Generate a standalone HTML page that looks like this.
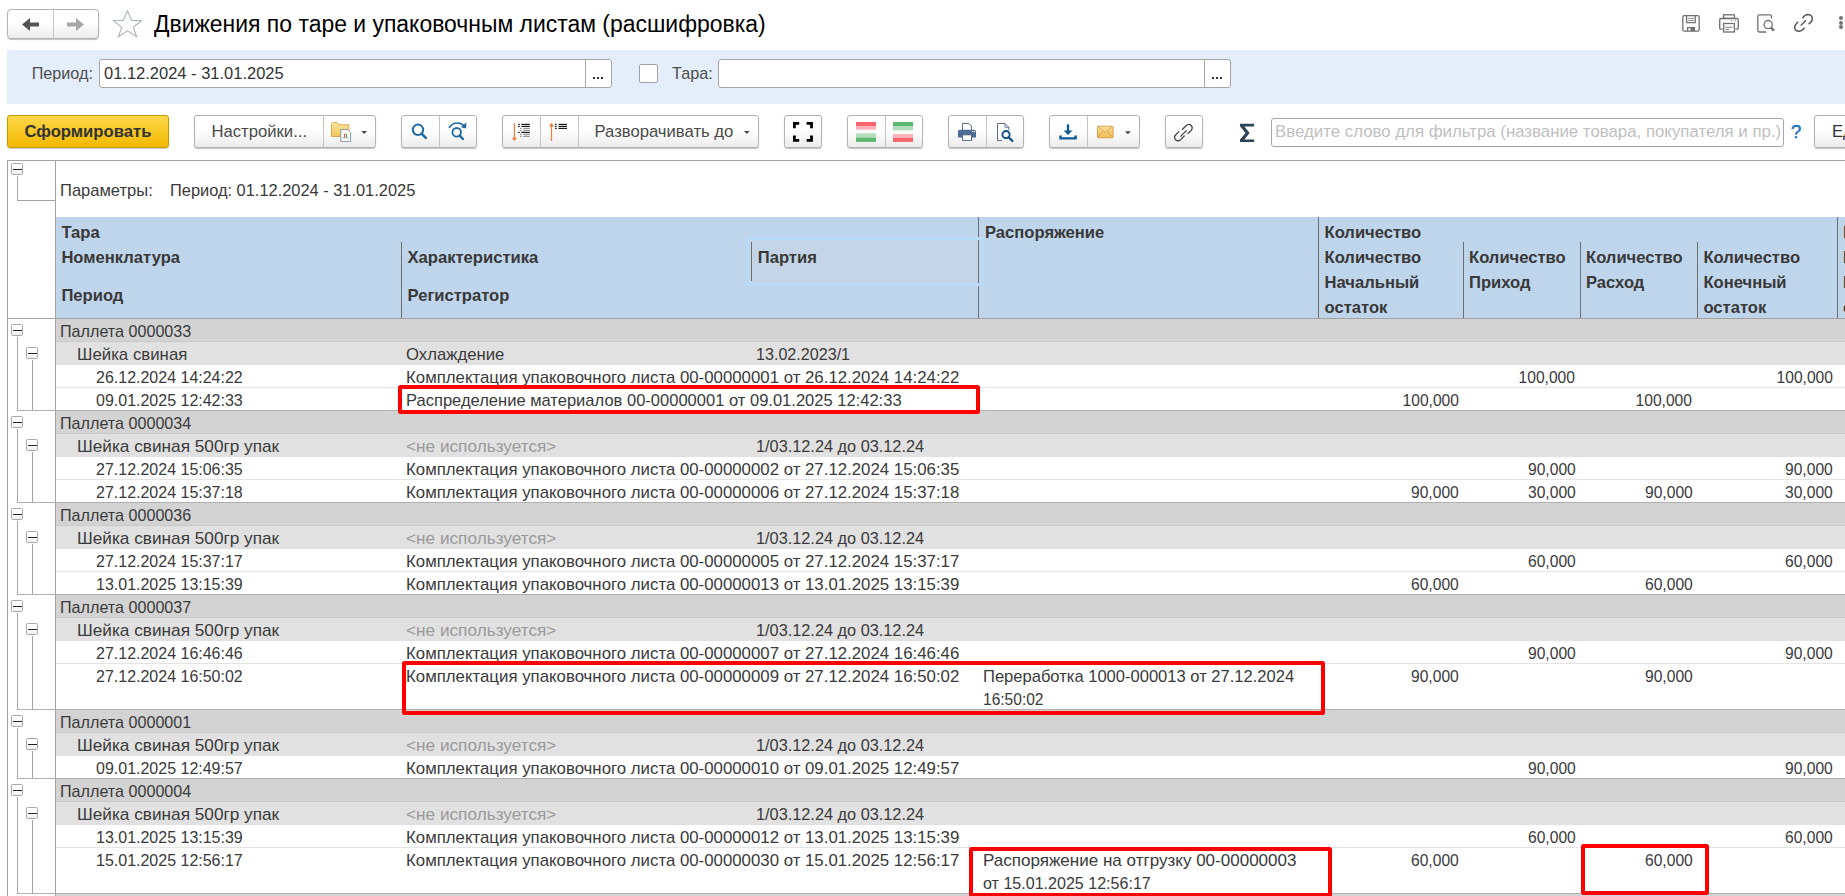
<!DOCTYPE html><html><head><meta charset="utf-8"><style>
html,body{margin:0;padding:0}
body{width:1845px;height:896px;overflow:hidden;position:relative;background:#fff;font-family:"Liberation Sans",sans-serif}
.t{position:absolute;white-space:pre}
svg{position:absolute;overflow:visible}
</style></head><body>

<div style="position:absolute;left:7px;top:9px;width:91.5px;height:30px;box-sizing:border-box;border:1px solid #b3b3b3;border-radius:3px;background:linear-gradient(#ffffff 0%,#ffffff 45%,#ececec 100%);box-shadow:0 1px 1px rgba(0,0,0,0.25);border-radius:4px"></div>
<div style="position:absolute;left:53px;top:10px;width:1px;height:28px;background:#c4c4c4"></div>
<svg style="left:0;top:0" width="1" height="1"><path d="M22 24.5 L30 18 L30 22.5 L39 22.5 L39 26.5 L30 26.5 L30 31 Z" fill="#555"/><path d="M84 24.5 L76 18 L76 22.5 L67 22.5 L67 26.5 L76 26.5 L76 31 Z" fill="#a8a8a8"/></svg>
<svg style="left:0;top:0" width="1" height="1"><path d="M127.5 10.9 L131.8 20.5 L141.5 20.5 L133.4 27.4 L136.6 36.8 L127.5 30.9 L118.4 36.8 L121.6 27.4 L113.5 20.5 L123.2 20.5 Z" fill="none" stroke="#aab2bb" stroke-width="1.1"/></svg>
<div class="t" style="left:154.2px;top:10.71px;font-size:23px;line-height:26.45px;color:#000;font-weight:normal;transform:scaleX(0.997);transform-origin:left top;">Движения по таре и упаковочным листам (расшифровка)</div>
<svg style="left:0;top:0" width="1" height="1" fill="none" stroke="#707070" stroke-width="1.3">
<rect x="1682.8" y="15.6" width="16.4" height="15.6" rx="1.6"/>
<path d="M1686.6 15.6 V22.6 H1695.2 V15.6"/><path d="M1688.1 18.3 H1694 M1688.1 20.4 H1694" stroke-width="0.8"/>
<path d="M1687.6 31.2 V27.6 H1694.4 V31.2"/><rect x="1690.6" y="28" width="3.6" height="3" fill="#707070" stroke="none"/>
<rect x="1723.6" y="14.8" width="10.8" height="3.6"/>
<path d="M1722.5 29.2 H1721 Q1719.7 29.2 1719.7 27.9 V19.8 Q1719.7 18.5 1721 18.5 H1737 Q1738.3 18.5 1738.3 19.8 V27.9 Q1738.3 29.2 1737 29.2 H1735.5"/>
<rect x="1723.6" y="23.5" width="10.8" height="8.5"/>
<path d="M1725.2 27.2 H1732.6 M1725.2 29.4 H1729" stroke-width="0.9"/>
<path d="M1731 20.7 H1732.2 M1734.6 20.7 H1735.8" stroke-width="0.9"/>
<path d="M1766.2 32 H1759.3 Q1757.8 32 1757.8 30.5 V16.3 Q1757.8 14.8 1759.3 14.8 H1770 Q1771.5 14.8 1771.5 16.3 V18.4"/>
<circle cx="1768.2" cy="24.6" r="4.1"/><path d="M1771.3 27.8 L1774 30.6" stroke-width="2.4"/>
<path d="M1802.4 18.2 Q1805 14.6 1808 14.6 Q1812.3 14.8 1812.3 19 Q1812.2 21.6 1808.6 24.2" stroke="#5a5a5a" stroke-width="1.5"/>
<path d="M1798.2 21.8 Q1794.6 25 1794.6 27.6 Q1795 31.2 1799 31.3 Q1801.6 31.3 1804.6 27.8" stroke="#5a5a5a" stroke-width="1.5"/>
<path d="M1800.8 25.5 L1806.1 20.2" stroke="#5a5a5a" stroke-width="1.5"/>
</svg>
<div style="position:absolute;left:1838.5px;top:15.5px;width:4px;height:4px;border-radius:50%;background:#747474"></div>
<div style="position:absolute;left:1838.5px;top:20.5px;width:4px;height:4px;border-radius:50%;background:#747474"></div>
<div style="position:absolute;left:1838.5px;top:25.3px;width:4px;height:4px;border-radius:50%;background:#747474"></div>
<div style="position:absolute;left:7px;top:50px;width:1838px;height:54px;background:#e4eefa"></div>
<div class="t" style="left:31.7px;top:64.07px;font-size:16.2px;line-height:18.63px;color:#4d4d4d;font-weight:normal;">Период:</div>
<div style="position:absolute;left:99px;top:59.3px;width:513px;height:28.4px;box-sizing:border-box;border:1px solid #a5a5a5;border-radius:3px;background:#fff"></div>
<div style="position:absolute;left:585px;top:60px;width:1px;height:27px;background:#a5a5a5"></div>
<div class="t" style="left:103.6px;top:63.64px;font-size:16.67px;line-height:19.171px;color:#333;font-weight:normal;transform:scaleX(0.99);transform-origin:left top;">01.12.2024 - 31.01.2025</div>
<div style="position:absolute;left:593.0px;top:76.8px;width:2.2px;height:2.2px;background:#333"></div>
<div style="position:absolute;left:597.1px;top:76.8px;width:2.2px;height:2.2px;background:#333"></div>
<div style="position:absolute;left:601.2px;top:76.8px;width:2.2px;height:2.2px;background:#333"></div>
<div style="position:absolute;left:639px;top:64px;width:19px;height:19px;box-sizing:border-box;border:1px solid #a0a0a0;border-radius:2px;background:#fff"></div>
<div class="t" style="left:672px;top:64.07px;font-size:16.2px;line-height:18.63px;color:#4d4d4d;font-weight:normal;">Тара:</div>
<div style="position:absolute;left:718px;top:59.3px;width:513px;height:28.4px;box-sizing:border-box;border:1px solid #a5a5a5;border-radius:3px;background:#fff"></div>
<div style="position:absolute;left:1204px;top:60px;width:1px;height:27px;background:#a5a5a5"></div>
<div style="position:absolute;left:1212.0px;top:76.8px;width:2.2px;height:2.2px;background:#333"></div>
<div style="position:absolute;left:1216.1px;top:76.8px;width:2.2px;height:2.2px;background:#333"></div>
<div style="position:absolute;left:1220.2px;top:76.8px;width:2.2px;height:2.2px;background:#333"></div>
<div style="position:absolute;left:7px;top:115px;width:162px;height:33px;box-sizing:border-box;border:1px solid #c29b00;border-radius:3px;background:linear-gradient(#fdd64a,#f2b900);box-shadow:0 1px 1px rgba(0,0,0,0.2)"></div>
<div class="t" style="left:24.5px;top:121.84px;font-size:16.67px;line-height:19.171px;color:#333;font-weight:bold;">Сформировать</div>
<div style="position:absolute;left:194px;top:115px;width:182px;height:33px;box-sizing:border-box;border:1px solid #b3b3b3;border-radius:3px;background:linear-gradient(#ffffff 0%,#ffffff 45%,#ececec 100%);box-shadow:0 1px 1px rgba(0,0,0,0.25);"></div>
<div style="position:absolute;left:323px;top:116px;width:1px;height:31px;background:#c4c4c4"></div>
<div class="t" style="left:211.5px;top:121.84px;font-size:16.67px;line-height:19.171px;color:#4a4a4a;font-weight:normal;">Настройки...</div>
<svg style="left:0;top:0" width="1" height="1">
<defs><linearGradient id="fold" x1="0" y1="0" x2="0" y2="1"><stop offset="0" stop-color="#fde7a0"/><stop offset="1" stop-color="#f2c45a"/></linearGradient></defs>
<path d="M331.5 136.5 V124.5 Q331.5 122.5 333.5 122.5 H337 L339 124.8 H348.8 V136.5 Z" fill="url(#fold)" stroke="#d9a040" stroke-width="0.9"/>
<path d="M340.8 129.6 H347.8 L350.6 132.4 V141.4 H340.8 Z" fill="#fff" stroke="#7d8da0" stroke-width="0.9"/>
<path d="M344.6 137.6 V133.6" stroke="#e03a3a" stroke-width="1"/>
<path d="M346.5 137.6 V133.6" stroke="#3aa04a" stroke-width="1"/>
<path d="M342.4 137.9 H348.8" stroke="#777" stroke-width="0.6"/>
<path d="M361.4 131 H367 L364.2 134 Z" fill="#444"/>
</svg>
<div style="position:absolute;left:401px;top:115px;width:75.5px;height:33px;box-sizing:border-box;border:1px solid #b3b3b3;border-radius:3px;background:linear-gradient(#ffffff 0%,#ffffff 45%,#ececec 100%);box-shadow:0 1px 1px rgba(0,0,0,0.25);"></div>
<div style="position:absolute;left:439px;top:116px;width:1px;height:31px;background:#c4c4c4"></div>
<svg style="left:0;top:0" width="1" height="1" fill="none" stroke="#1f68a6">
<circle cx="418" cy="129.8" r="5.2" stroke-width="2"/><path d="M421.8 133.8 L425.8 137.9" stroke-width="2.6" stroke-linecap="round"/>
<circle cx="456.7" cy="132.3" r="4.3" stroke-width="1.8"/><path d="M459.7 135.6 L463 139" stroke-width="2.4" stroke-linecap="round"/>
<path d="M449 127.8 Q452.5 122.8 457.8 123 Q462 123.3 464.8 126.4" stroke-width="1.7"/><path d="M466.3 122.6 L466.2 128.6 L460.8 127.2 Z" fill="#1f68a6" stroke="none"/>
</svg>
<div style="position:absolute;left:502px;top:115px;width:256.5px;height:33px;box-sizing:border-box;border:1px solid #b3b3b3;border-radius:3px;background:linear-gradient(#ffffff 0%,#ffffff 45%,#ececec 100%);box-shadow:0 1px 1px rgba(0,0,0,0.25);"></div>
<div style="position:absolute;left:540px;top:116px;width:1px;height:31px;background:#c4c4c4"></div>
<div style="position:absolute;left:578px;top:116px;width:1px;height:31px;background:#c4c4c4"></div>
<svg style="left:0;top:0" width="1" height="1">
<path d="M514.4 123 V138.5" stroke="#ef7d40" stroke-width="1.2"/><path d="M511.8 137.7 H517 L514.4 141 Z" fill="#ef7d40"/>
<g fill="#1a1a1a"><rect x="518.2" y="123.8" width="1.6" height="1.2"/><rect x="521.4" y="123.8" width="8.4" height="1.2"/>
<rect x="518.2" y="125.8" width="1.6" height="1.2"/><rect x="521.4" y="125.8" width="8.4" height="1.2"/>
<rect x="518.2" y="131.8" width="1.6" height="1.2"/><rect x="521.4" y="131.8" width="8.4" height="1.2"/></g>
<g fill="#8a8a8a"><rect x="520" y="127.8" width="1.6" height="1.1"/><rect x="523.3" y="127.8" width="6.5" height="1.1"/>
<rect x="520" y="129.8" width="1.6" height="1.1"/><rect x="523.3" y="129.8" width="6.5" height="1.1"/>
<rect x="520" y="133.8" width="1.6" height="1.1"/><rect x="523.3" y="133.8" width="6.5" height="1.1"/>
<rect x="520" y="135.8" width="1.6" height="1.1"/><rect x="523.3" y="135.8" width="6.5" height="1.1"/></g>
<path d="M551.5 126 V141" stroke="#ef7d40" stroke-width="1.2"/><path d="M548.9 126.4 H554.1 L551.5 122.8 Z" fill="#ef7d40"/>
<g fill="#1a1a1a"><rect x="555" y="123.8" width="1.6" height="1.2"/><rect x="558.5" y="123.8" width="8.5" height="1.2"/>
<rect x="555" y="125.8" width="1.6" height="1.2"/><rect x="558.5" y="125.8" width="8.5" height="1.2"/>
<rect x="555" y="127.8" width="1.6" height="1.2"/><rect x="558.5" y="127.8" width="8.5" height="1.2"/></g>
<path d="M744 131 H749.6 L746.8 134 Z" fill="#444"/>
</svg>
<div class="t" style="left:594.5px;top:121.84px;font-size:16.67px;line-height:19.171px;color:#4a4a4a;font-weight:normal;">Разворачивать до</div>
<div style="position:absolute;left:784px;top:115px;width:37.5px;height:33px;box-sizing:border-box;border:1px solid #b3b3b3;border-radius:3px;background:linear-gradient(#ffffff 0%,#ffffff 45%,#ececec 100%);box-shadow:0 1px 1px rgba(0,0,0,0.25);"></div>
<svg style="left:0;top:0" width="1" height="1" fill="none" stroke="#000" stroke-width="2.8">
<path d="M794.4 128.2 V123.3 H799.2 M806.6 123.3 H811.5 V128.2 M811.5 135.5 V140.4 H806.6 M799.2 140.4 H794.4 V135.5"/>
</svg>
<div style="position:absolute;left:846.5px;top:115px;width:76.5px;height:33px;box-sizing:border-box;border:1px solid #b3b3b3;border-radius:3px;background:linear-gradient(#ffffff 0%,#ffffff 45%,#ececec 100%);box-shadow:0 1px 1px rgba(0,0,0,0.25);"></div>
<div style="position:absolute;left:885px;top:116px;width:1px;height:31px;background:#c4c4c4"></div>
<svg style="left:0;top:0" width="1" height="1">
<rect x="856" y="122" width="20" height="4" fill="#f7646c"/><rect x="856" y="126" width="20" height="3.7" fill="#f9b3b8"/>
<rect x="856" y="133.3" width="20" height="4.3" fill="#b3ddbb"/><rect x="856" y="137.6" width="20" height="4.3" fill="#5cb871"/>
<rect x="893" y="122" width="20" height="4" fill="#5cb871"/><rect x="893" y="126" width="20" height="4.5" fill="#b3ddbb"/>
<rect x="893" y="134.1" width="20" height="3.8" fill="#f9b3b8"/><rect x="893" y="137.9" width="20" height="4" fill="#f7646c"/>
</svg>
<div style="position:absolute;left:948px;top:115px;width:75.5px;height:33px;box-sizing:border-box;border:1px solid #b3b3b3;border-radius:3px;background:linear-gradient(#ffffff 0%,#ffffff 45%,#ececec 100%);box-shadow:0 1px 1px rgba(0,0,0,0.25);"></div>
<div style="position:absolute;left:986px;top:116px;width:1px;height:31px;background:#c4c4c4"></div>
<svg style="left:0;top:0" width="1" height="1">
<path d="M962.5 130.5 V123.5 H968.8 L971.4 126.1 V130.5" fill="#fff" stroke="#4a5f7a" stroke-width="0.9"/>
<path d="M958 131.5 Q958 129.8 959.7 129.8 H974.3 Q976 129.8 976 131.5 V137.5 H972 V140.6 H962 V137.5 H958 Z" fill="#4d6b93"/>
<rect x="962.6" y="134.9" width="8.8" height="5.5" fill="#fff" stroke="#4a5f7a" stroke-width="0.8"/>
<rect x="972.3" y="131" width="1.2" height="1" fill="#fff"/><rect x="974" y="131" width="1.2" height="1" fill="#fff"/>
<path d="M997.5 140.6 V123.5 H1005 L1008.8 127.3 V130.5" fill="none" stroke="#4a5f7a" stroke-width="0.9"/>
<path d="M997.5 140.6 H1002" stroke="#4a5f7a" stroke-width="0.9"/>
<path d="M1005 123.5 V127.3 H1008.8" fill="none" stroke="#4a5f7a" stroke-width="0.8"/>
<circle cx="1006" cy="134.6" r="3.6" fill="#fff" stroke="#0f4f8a" stroke-width="1.9"/><path d="M1008.7 137.4 L1012.4 141" stroke="#0f4f8a" stroke-width="2.3" stroke-linecap="round"/>
</svg>
<div style="position:absolute;left:1049px;top:115px;width:90.5px;height:33px;box-sizing:border-box;border:1px solid #b3b3b3;border-radius:3px;background:linear-gradient(#ffffff 0%,#ffffff 45%,#ececec 100%);box-shadow:0 1px 1px rgba(0,0,0,0.25);"></div>
<div style="position:absolute;left:1087px;top:116px;width:1px;height:31px;background:#c4c4c4"></div>
<svg style="left:0;top:0" width="1" height="1">
<path d="M1068 124.4 V132" stroke="#0d5a96" stroke-width="2.3"/><path d="M1063.6 130.6 H1072.4 L1068 135 Z" fill="#0d5a96"/>
<path d="M1060.5 135.6 V138.4 H1075.6 V135.6" fill="none" stroke="#0d5a96" stroke-width="2.4"/>
<defs><linearGradient id="env" x1="0" y1="0" x2="0" y2="1"><stop offset="0" stop-color="#fbe2a0"/><stop offset="1" stop-color="#f0bb55"/></linearGradient></defs>
<rect x="1097.5" y="126.2" width="15.6" height="11.6" rx="1" fill="url(#env)" stroke="#d49b3a" stroke-width="0.9"/>
<path d="M1097.8 126.6 L1105.3 132.6 L1112.8 126.6 M1097.8 137.4 L1103.2 131.6 M1112.8 137.4 L1107.4 131.6" fill="none" stroke="#d49b3a" stroke-width="0.8"/>
<path d="M1125 131.2 H1130.8 L1127.9 134.2 Z" fill="#444"/>
</svg>
<div style="position:absolute;left:1165px;top:115px;width:37.5px;height:33px;box-sizing:border-box;border:1px solid #b3b3b3;border-radius:3px;background:linear-gradient(#ffffff 0%,#ffffff 45%,#ececec 100%);box-shadow:0 1px 1px rgba(0,0,0,0.25);"></div>
<svg style="left:0;top:0" width="1" height="1" fill="none" stroke="#444" stroke-width="1.3">
<path d="M1182 129.8 L1186 125.8 Q1188.8 123.2 1191.2 125.5 Q1193.4 128 1190.8 130.8 L1187.6 133.8"/>
<path d="M1184.6 135.6 L1180.8 139.4 Q1178 142 1175.6 139.7 Q1173.3 137.2 1176 134.5 L1179.2 131.4"/>
<path d="M1180.4 136.6 L1186.6 130.4"/>
</svg>
<svg style="left:0;top:0" width="1" height="1"><path d="M1240 123.8 H1254 V126.4 H1244.4 L1249.6 133 L1244.4 139.4 H1254.2 V142 H1240 V139.6 L1245.6 133 L1240 126.2 Z" fill="#2e4356"/></svg>
<div style="position:absolute;left:1271px;top:118.2px;width:512.5px;height:28.4px;box-sizing:border-box;border:1px solid #a5a5a5;border-radius:3px;background:#fff"></div>
<div class="t" style="left:1274.5px;top:122.34px;font-size:16.67px;line-height:19.171px;color:#bfbfbf;font-weight:normal;transform:scaleX(1.01);transform-origin:left top;">Введите слово для фильтра (название товара, покупателя и пр.)</div>
<div class="t" style="left:1791px;top:121.45px;font-size:18.5px;line-height:21.275px;color:#1a6dbd;font-weight:normal;-webkit-text-stroke:0.4px #1a6dbd;">?</div>
<div style="position:absolute;left:1814px;top:115.3px;width:60px;height:32.5px;box-sizing:border-box;border:1px solid #b3b3b3;border-radius:3px;background:linear-gradient(#ffffff 0%,#ffffff 45%,#ececec 100%);box-shadow:0 1px 1px rgba(0,0,0,0.25);"></div>
<div class="t" style="left:1832px;top:122.14px;font-size:16.67px;line-height:19.171px;color:#333;font-weight:normal;">Ед</div>
<div style="position:absolute;left:7px;top:160px;width:1838px;height:1px;background:#a3a3a3"></div>
<div style="position:absolute;left:7px;top:160px;width:1px;height:736px;background:#a3a3a3"></div>
<div style="position:absolute;left:55px;top:160px;width:1px;height:736px;background:#a3a3a3"></div>
<div style="position:absolute;left:11.1px;top:163.1px;width:12.4px;height:12.4px;box-sizing:border-box;border:1px solid #a8a8a8;border-radius:1.5px;background:linear-gradient(#fff 50%,#eeeeee)"></div>
<div style="position:absolute;left:13.1px;top:168.9px;width:8.8px;height:1.2px;background:#222"></div>
<div style="position:absolute;left:17px;top:175.5px;width:1px;height:25px;background:#a3a3a3"></div>
<div style="position:absolute;left:17px;top:200px;width:38px;height:1px;background:#a3a3a3"></div>
<div class="t" style="left:60.2px;top:180.70px;font-size:16.6px;line-height:19.09px;color:#3a3a3a;font-weight:normal;transform:scaleX(0.9965);transform-origin:left top;">Параметры:</div>
<div class="t" style="left:170.0px;top:180.70px;font-size:16.6px;line-height:19.09px;color:#3a3a3a;font-weight:normal;transform:scaleX(0.9879);transform-origin:left top;">Период: 01.12.2024 - 31.01.2025</div>
<div style="position:absolute;left:56px;top:217px;width:1789px;height:101px;background:#bfd5ec"></div>
<div style="position:absolute;left:7px;top:318px;width:1838px;height:1px;background:#a3a3a3"></div>
<div style="position:absolute;left:746px;top:237px;width:238px;height:49px;background:#c3d5e6"></div>
<div style="position:absolute;left:401px;top:242px;width:1px;height:76px;background:#6e6e6e"></div>
<div style="position:absolute;left:751px;top:242px;width:1px;height:39px;background:#6e6e6e"></div>
<div style="position:absolute;left:978px;top:217px;width:1px;height:101px;background:#6e6e6e"></div>
<div style="position:absolute;left:1318px;top:217px;width:1px;height:101px;background:#6e6e6e"></div>
<div style="position:absolute;left:1463px;top:242px;width:1px;height:76px;background:#6e6e6e"></div>
<div style="position:absolute;left:1580px;top:242px;width:1px;height:76px;background:#6e6e6e"></div>
<div style="position:absolute;left:1697px;top:242px;width:1px;height:76px;background:#6e6e6e"></div>
<div style="position:absolute;left:1837px;top:217px;width:1px;height:101px;background:#6e6e6e"></div>
<div style="position:absolute;left:746px;top:237px;width:238px;height:3px;background:#b8dcf8"></div>
<div style="position:absolute;left:746px;top:283px;width:238px;height:3px;background:#b8dcf8"></div>
<div style="position:absolute;left:746px;top:240px;width:3px;height:43px;background:#b8dcf8"></div>
<div style="position:absolute;left:981px;top:240px;width:3px;height:43px;background:#b8dcf8"></div>
<div class="t" style="left:61.4px;top:222.70px;font-size:16.6px;line-height:19.09px;color:#383838;font-weight:bold;">Тара</div>
<div class="t" style="left:61.4px;top:247.70px;font-size:16.6px;line-height:19.09px;color:#383838;font-weight:bold;">Номенклатура</div>
<div class="t" style="left:61.4px;top:285.70px;font-size:16.6px;line-height:19.09px;color:#383838;font-weight:bold;">Период</div>
<div class="t" style="left:407.5px;top:247.70px;font-size:16.6px;line-height:19.09px;color:#383838;font-weight:bold;">Характеристика</div>
<div class="t" style="left:407.5px;top:285.70px;font-size:16.6px;line-height:19.09px;color:#383838;font-weight:bold;">Регистратор</div>
<div class="t" style="left:757.8px;top:247.70px;font-size:16.6px;line-height:19.09px;color:#383838;font-weight:bold;">Партия</div>
<div class="t" style="left:985px;top:222.70px;font-size:16.6px;line-height:19.09px;color:#383838;font-weight:bold;">Распоряжение</div>
<div class="t" style="left:1324.5px;top:222.70px;font-size:16.6px;line-height:19.09px;color:#383838;font-weight:bold;">Количество</div>
<div class="t" style="left:1324.5px;top:247.70px;font-size:16.6px;line-height:19.09px;color:#383838;font-weight:bold;">Количество</div>
<div class="t" style="left:1324.5px;top:272.70px;font-size:16.6px;line-height:19.09px;color:#383838;font-weight:bold;">Начальный</div>
<div class="t" style="left:1324.5px;top:297.70px;font-size:16.6px;line-height:19.09px;color:#383838;font-weight:bold;">остаток</div>
<div class="t" style="left:1469px;top:247.70px;font-size:16.6px;line-height:19.09px;color:#383838;font-weight:bold;">Количество</div>
<div class="t" style="left:1469px;top:272.70px;font-size:16.6px;line-height:19.09px;color:#383838;font-weight:bold;">Приход</div>
<div class="t" style="left:1586px;top:247.70px;font-size:16.6px;line-height:19.09px;color:#383838;font-weight:bold;">Количество</div>
<div class="t" style="left:1586px;top:272.70px;font-size:16.6px;line-height:19.09px;color:#383838;font-weight:bold;">Расход</div>
<div class="t" style="left:1703.4px;top:247.70px;font-size:16.6px;line-height:19.09px;color:#383838;font-weight:bold;">Количество</div>
<div class="t" style="left:1703.4px;top:272.70px;font-size:16.6px;line-height:19.09px;color:#383838;font-weight:bold;">Конечный</div>
<div class="t" style="left:1703.4px;top:297.70px;font-size:16.6px;line-height:19.09px;color:#383838;font-weight:bold;">остаток</div>
<div class="t" style="left:1843px;top:222.70px;font-size:16.6px;line-height:19.09px;color:#383838;font-weight:bold;">К</div>
<div class="t" style="left:1843px;top:247.70px;font-size:16.6px;line-height:19.09px;color:#383838;font-weight:bold;">К</div>
<div class="t" style="left:1843px;top:272.70px;font-size:16.6px;line-height:19.09px;color:#383838;font-weight:bold;">К</div>
<div class="t" style="left:1843px;top:297.70px;font-size:16.6px;line-height:19.09px;color:#383838;font-weight:bold;">о</div>
<div style="position:absolute;left:56px;top:319px;width:1789px;height:23px;background:#d3d3d3"></div>
<div style="position:absolute;left:11.1px;top:324.1px;width:12.4px;height:12.4px;box-sizing:border-box;border:1px solid #a8a8a8;border-radius:1.5px;background:linear-gradient(#fff 50%,#eeeeee)"></div>
<div style="position:absolute;left:13.1px;top:329.9px;width:8.8px;height:1.2px;background:#222"></div>
<div class="t" style="left:59.6px;top:321.50px;font-size:16.6px;line-height:19.09px;color:#3a3a3a;font-weight:normal;transform:scaleX(0.9719);transform-origin:left top;">Паллета 0000033</div>
<div style="position:absolute;left:56px;top:341px;width:1789px;height:1px;background:#c9c9c9"></div>
<div style="position:absolute;left:56px;top:342px;width:1789px;height:23px;background:#e1e1e1"></div>
<div style="position:absolute;left:26.1px;top:347.1px;width:12.4px;height:12.4px;box-sizing:border-box;border:1px solid #a8a8a8;border-radius:1.5px;background:linear-gradient(#fff 50%,#eeeeee)"></div>
<div style="position:absolute;left:28.1px;top:352.9px;width:8.8px;height:1.2px;background:#222"></div>
<div class="t" style="left:77.2px;top:344.50px;font-size:16.6px;line-height:19.09px;color:#3a3a3a;font-weight:normal;transform:scaleX(1.013);transform-origin:left top;">Шейка свиная</div>
<div class="t" style="left:405.7px;top:344.50px;font-size:16.6px;line-height:19.09px;color:#3a3a3a;font-weight:normal;transform:scaleX(1.008);transform-origin:left top;">Охлаждение</div>
<div class="t" style="left:756.2px;top:344.50px;font-size:16.6px;line-height:19.09px;color:#3a3a3a;font-weight:normal;transform:scaleX(0.9709);transform-origin:left top;">13.02.2023/1</div>
<div class="t" style="left:95.5px;top:367.50px;font-size:16.6px;line-height:19.09px;color:#3a3a3a;font-weight:normal;transform:scaleX(0.9638);transform-origin:left top;">26.12.2024 14:24:22</div>
<div class="t" style="left:405.7px;top:367.50px;font-size:16.6px;line-height:19.09px;color:#3a3a3a;font-weight:normal;transform:scaleX(1.013);transform-origin:left top;">Комплектация упаковочного листа 00-00000001 от 26.12.2024 14:24:22</div>
<div class="t" style="right:269.70000000000005px;top:367.50px;font-size:16.6px;line-height:19.09px;color:#3a3a3a;font-weight:normal;transform:scaleX(0.9407);transform-origin:right top;">100,000</div>
<div class="t" style="right:12.400000000000091px;top:367.50px;font-size:16.6px;line-height:19.09px;color:#3a3a3a;font-weight:normal;transform:scaleX(0.9407);transform-origin:right top;">100,000</div>
<div style="position:absolute;left:56px;top:387px;width:1789px;height:1px;background:#e4e4e4"></div>
<div class="t" style="left:95.5px;top:390.50px;font-size:16.6px;line-height:19.09px;color:#3a3a3a;font-weight:normal;transform:scaleX(0.9638);transform-origin:left top;">09.01.2025 12:42:33</div>
<div class="t" style="left:405.7px;top:390.50px;font-size:16.6px;line-height:19.09px;color:#3a3a3a;font-weight:normal;transform:scaleX(0.996);transform-origin:left top;">Распределение материалов 00-00000001 от 09.01.2025 12:42:33</div>
<div class="t" style="right:386.4000000000001px;top:390.50px;font-size:16.6px;line-height:19.09px;color:#3a3a3a;font-weight:normal;transform:scaleX(0.9407);transform-origin:right top;">100,000</div>
<div class="t" style="right:152.70000000000005px;top:390.50px;font-size:16.6px;line-height:19.09px;color:#3a3a3a;font-weight:normal;transform:scaleX(0.9407);transform-origin:right top;">100,000</div>
<div style="position:absolute;left:17px;top:410px;width:1828px;height:1px;background:#b0b0b0"></div>
<div style="position:absolute;left:17px;top:336.5px;width:1px;height:73.5px;background:#a3a3a3"></div>
<div style="position:absolute;left:32px;top:359.5px;width:1px;height:50.5px;background:#a3a3a3"></div>
<div style="position:absolute;left:56px;top:411px;width:1789px;height:23px;background:#d3d3d3"></div>
<div style="position:absolute;left:11.1px;top:416.1px;width:12.4px;height:12.4px;box-sizing:border-box;border:1px solid #a8a8a8;border-radius:1.5px;background:linear-gradient(#fff 50%,#eeeeee)"></div>
<div style="position:absolute;left:13.1px;top:421.9px;width:8.8px;height:1.2px;background:#222"></div>
<div class="t" style="left:59.6px;top:413.50px;font-size:16.6px;line-height:19.09px;color:#3a3a3a;font-weight:normal;transform:scaleX(0.9719);transform-origin:left top;">Паллета 0000034</div>
<div style="position:absolute;left:56px;top:433px;width:1789px;height:1px;background:#c9c9c9"></div>
<div style="position:absolute;left:56px;top:434px;width:1789px;height:23px;background:#e1e1e1"></div>
<div style="position:absolute;left:26.1px;top:439.1px;width:12.4px;height:12.4px;box-sizing:border-box;border:1px solid #a8a8a8;border-radius:1.5px;background:linear-gradient(#fff 50%,#eeeeee)"></div>
<div style="position:absolute;left:28.1px;top:444.9px;width:8.8px;height:1.2px;background:#222"></div>
<div class="t" style="left:77.2px;top:436.50px;font-size:16.6px;line-height:19.09px;color:#3a3a3a;font-weight:normal;transform:scaleX(1.0371);transform-origin:left top;">Шейка свиная 500гр упак</div>
<div class="t" style="left:405.7px;top:436.50px;font-size:16.6px;line-height:19.09px;color:#9a9a9a;font-weight:normal;transform:scaleX(1.0371);transform-origin:left top;">&lt;не используется&gt;</div>
<div class="t" style="left:756.2px;top:436.50px;font-size:16.6px;line-height:19.09px;color:#3a3a3a;font-weight:normal;transform:scaleX(0.9819);transform-origin:left top;">1/03.12.24 до 03.12.24</div>
<div class="t" style="left:95.5px;top:459.50px;font-size:16.6px;line-height:19.09px;color:#3a3a3a;font-weight:normal;transform:scaleX(0.9638);transform-origin:left top;">27.12.2024 15:06:35</div>
<div class="t" style="left:405.7px;top:459.50px;font-size:16.6px;line-height:19.09px;color:#3a3a3a;font-weight:normal;transform:scaleX(1.013);transform-origin:left top;">Комплектация упаковочного листа 00-00000002 от 27.12.2024 15:06:35</div>
<div class="t" style="right:269.70000000000005px;top:459.50px;font-size:16.6px;line-height:19.09px;color:#3a3a3a;font-weight:normal;transform:scaleX(0.9407);transform-origin:right top;">90,000</div>
<div class="t" style="right:12.400000000000091px;top:459.50px;font-size:16.6px;line-height:19.09px;color:#3a3a3a;font-weight:normal;transform:scaleX(0.9407);transform-origin:right top;">90,000</div>
<div style="position:absolute;left:56px;top:479px;width:1789px;height:1px;background:#e4e4e4"></div>
<div class="t" style="left:95.5px;top:482.50px;font-size:16.6px;line-height:19.09px;color:#3a3a3a;font-weight:normal;transform:scaleX(0.9638);transform-origin:left top;">27.12.2024 15:37:18</div>
<div class="t" style="left:405.7px;top:482.50px;font-size:16.6px;line-height:19.09px;color:#3a3a3a;font-weight:normal;transform:scaleX(1.013);transform-origin:left top;">Комплектация упаковочного листа 00-00000006 от 27.12.2024 15:37:18</div>
<div class="t" style="right:386.4000000000001px;top:482.50px;font-size:16.6px;line-height:19.09px;color:#3a3a3a;font-weight:normal;transform:scaleX(0.9407);transform-origin:right top;">90,000</div>
<div class="t" style="right:269.70000000000005px;top:482.50px;font-size:16.6px;line-height:19.09px;color:#3a3a3a;font-weight:normal;transform:scaleX(0.9407);transform-origin:right top;">30,000</div>
<div class="t" style="right:152.70000000000005px;top:482.50px;font-size:16.6px;line-height:19.09px;color:#3a3a3a;font-weight:normal;transform:scaleX(0.9407);transform-origin:right top;">90,000</div>
<div class="t" style="right:12.400000000000091px;top:482.50px;font-size:16.6px;line-height:19.09px;color:#3a3a3a;font-weight:normal;transform:scaleX(0.9407);transform-origin:right top;">30,000</div>
<div style="position:absolute;left:17px;top:502px;width:1828px;height:1px;background:#b0b0b0"></div>
<div style="position:absolute;left:17px;top:428.5px;width:1px;height:73.5px;background:#a3a3a3"></div>
<div style="position:absolute;left:32px;top:451.5px;width:1px;height:50.5px;background:#a3a3a3"></div>
<div style="position:absolute;left:56px;top:503px;width:1789px;height:23px;background:#d3d3d3"></div>
<div style="position:absolute;left:11.1px;top:508.1px;width:12.4px;height:12.4px;box-sizing:border-box;border:1px solid #a8a8a8;border-radius:1.5px;background:linear-gradient(#fff 50%,#eeeeee)"></div>
<div style="position:absolute;left:13.1px;top:513.9px;width:8.8px;height:1.2px;background:#222"></div>
<div class="t" style="left:59.6px;top:505.50px;font-size:16.6px;line-height:19.09px;color:#3a3a3a;font-weight:normal;transform:scaleX(0.9719);transform-origin:left top;">Паллета 0000036</div>
<div style="position:absolute;left:56px;top:525px;width:1789px;height:1px;background:#c9c9c9"></div>
<div style="position:absolute;left:56px;top:526px;width:1789px;height:23px;background:#e1e1e1"></div>
<div style="position:absolute;left:26.1px;top:531.1px;width:12.4px;height:12.4px;box-sizing:border-box;border:1px solid #a8a8a8;border-radius:1.5px;background:linear-gradient(#fff 50%,#eeeeee)"></div>
<div style="position:absolute;left:28.1px;top:536.9px;width:8.8px;height:1.2px;background:#222"></div>
<div class="t" style="left:77.2px;top:528.50px;font-size:16.6px;line-height:19.09px;color:#3a3a3a;font-weight:normal;transform:scaleX(1.0371);transform-origin:left top;">Шейка свиная 500гр упак</div>
<div class="t" style="left:405.7px;top:528.50px;font-size:16.6px;line-height:19.09px;color:#9a9a9a;font-weight:normal;transform:scaleX(1.0371);transform-origin:left top;">&lt;не используется&gt;</div>
<div class="t" style="left:756.2px;top:528.50px;font-size:16.6px;line-height:19.09px;color:#3a3a3a;font-weight:normal;transform:scaleX(0.9819);transform-origin:left top;">1/03.12.24 до 03.12.24</div>
<div class="t" style="left:95.5px;top:551.50px;font-size:16.6px;line-height:19.09px;color:#3a3a3a;font-weight:normal;transform:scaleX(0.9638);transform-origin:left top;">27.12.2024 15:37:17</div>
<div class="t" style="left:405.7px;top:551.50px;font-size:16.6px;line-height:19.09px;color:#3a3a3a;font-weight:normal;transform:scaleX(1.013);transform-origin:left top;">Комплектация упаковочного листа 00-00000005 от 27.12.2024 15:37:17</div>
<div class="t" style="right:269.70000000000005px;top:551.50px;font-size:16.6px;line-height:19.09px;color:#3a3a3a;font-weight:normal;transform:scaleX(0.9407);transform-origin:right top;">60,000</div>
<div class="t" style="right:12.400000000000091px;top:551.50px;font-size:16.6px;line-height:19.09px;color:#3a3a3a;font-weight:normal;transform:scaleX(0.9407);transform-origin:right top;">60,000</div>
<div style="position:absolute;left:56px;top:571px;width:1789px;height:1px;background:#e4e4e4"></div>
<div class="t" style="left:95.5px;top:574.50px;font-size:16.6px;line-height:19.09px;color:#3a3a3a;font-weight:normal;transform:scaleX(0.9638);transform-origin:left top;">13.01.2025 13:15:39</div>
<div class="t" style="left:405.7px;top:574.50px;font-size:16.6px;line-height:19.09px;color:#3a3a3a;font-weight:normal;transform:scaleX(1.013);transform-origin:left top;">Комплектация упаковочного листа 00-00000013 от 13.01.2025 13:15:39</div>
<div class="t" style="right:386.4000000000001px;top:574.50px;font-size:16.6px;line-height:19.09px;color:#3a3a3a;font-weight:normal;transform:scaleX(0.9407);transform-origin:right top;">60,000</div>
<div class="t" style="right:152.70000000000005px;top:574.50px;font-size:16.6px;line-height:19.09px;color:#3a3a3a;font-weight:normal;transform:scaleX(0.9407);transform-origin:right top;">60,000</div>
<div style="position:absolute;left:17px;top:594px;width:1828px;height:1px;background:#b0b0b0"></div>
<div style="position:absolute;left:17px;top:520.5px;width:1px;height:73.5px;background:#a3a3a3"></div>
<div style="position:absolute;left:32px;top:543.5px;width:1px;height:50.5px;background:#a3a3a3"></div>
<div style="position:absolute;left:56px;top:595px;width:1789px;height:23px;background:#d3d3d3"></div>
<div style="position:absolute;left:11.1px;top:600.1px;width:12.4px;height:12.4px;box-sizing:border-box;border:1px solid #a8a8a8;border-radius:1.5px;background:linear-gradient(#fff 50%,#eeeeee)"></div>
<div style="position:absolute;left:13.1px;top:605.9px;width:8.8px;height:1.2px;background:#222"></div>
<div class="t" style="left:59.6px;top:597.50px;font-size:16.6px;line-height:19.09px;color:#3a3a3a;font-weight:normal;transform:scaleX(0.9719);transform-origin:left top;">Паллета 0000037</div>
<div style="position:absolute;left:56px;top:617px;width:1789px;height:1px;background:#c9c9c9"></div>
<div style="position:absolute;left:56px;top:618px;width:1789px;height:23px;background:#e1e1e1"></div>
<div style="position:absolute;left:26.1px;top:623.1px;width:12.4px;height:12.4px;box-sizing:border-box;border:1px solid #a8a8a8;border-radius:1.5px;background:linear-gradient(#fff 50%,#eeeeee)"></div>
<div style="position:absolute;left:28.1px;top:628.9px;width:8.8px;height:1.2px;background:#222"></div>
<div class="t" style="left:77.2px;top:620.50px;font-size:16.6px;line-height:19.09px;color:#3a3a3a;font-weight:normal;transform:scaleX(1.0371);transform-origin:left top;">Шейка свиная 500гр упак</div>
<div class="t" style="left:405.7px;top:620.50px;font-size:16.6px;line-height:19.09px;color:#9a9a9a;font-weight:normal;transform:scaleX(1.0371);transform-origin:left top;">&lt;не используется&gt;</div>
<div class="t" style="left:756.2px;top:620.50px;font-size:16.6px;line-height:19.09px;color:#3a3a3a;font-weight:normal;transform:scaleX(0.9819);transform-origin:left top;">1/03.12.24 до 03.12.24</div>
<div class="t" style="left:95.5px;top:643.50px;font-size:16.6px;line-height:19.09px;color:#3a3a3a;font-weight:normal;transform:scaleX(0.9638);transform-origin:left top;">27.12.2024 16:46:46</div>
<div class="t" style="left:405.7px;top:643.50px;font-size:16.6px;line-height:19.09px;color:#3a3a3a;font-weight:normal;transform:scaleX(1.013);transform-origin:left top;">Комплектация упаковочного листа 00-00000007 от 27.12.2024 16:46:46</div>
<div class="t" style="right:269.70000000000005px;top:643.50px;font-size:16.6px;line-height:19.09px;color:#3a3a3a;font-weight:normal;transform:scaleX(0.9407);transform-origin:right top;">90,000</div>
<div class="t" style="right:12.400000000000091px;top:643.50px;font-size:16.6px;line-height:19.09px;color:#3a3a3a;font-weight:normal;transform:scaleX(0.9407);transform-origin:right top;">90,000</div>
<div style="position:absolute;left:56px;top:663px;width:1789px;height:1px;background:#e4e4e4"></div>
<div class="t" style="left:95.5px;top:666.50px;font-size:16.6px;line-height:19.09px;color:#3a3a3a;font-weight:normal;transform:scaleX(0.9638);transform-origin:left top;">27.12.2024 16:50:02</div>
<div class="t" style="left:405.7px;top:666.50px;font-size:16.6px;line-height:19.09px;color:#3a3a3a;font-weight:normal;transform:scaleX(1.013);transform-origin:left top;">Комплектация упаковочного листа 00-00000009 от 27.12.2024 16:50:02</div>
<div class="t" style="left:983.2px;top:666.50px;font-size:16.6px;line-height:19.09px;color:#3a3a3a;font-weight:normal;transform:scaleX(0.997);transform-origin:left top;">Переработка 1000-000013 от 27.12.2024</div>
<div class="t" style="left:983.2px;top:689.50px;font-size:16.6px;line-height:19.09px;color:#3a3a3a;font-weight:normal;transform:scaleX(0.9367);transform-origin:left top;">16:50:02</div>
<div class="t" style="right:386.4000000000001px;top:666.50px;font-size:16.6px;line-height:19.09px;color:#3a3a3a;font-weight:normal;transform:scaleX(0.9407);transform-origin:right top;">90,000</div>
<div class="t" style="right:152.70000000000005px;top:666.50px;font-size:16.6px;line-height:19.09px;color:#3a3a3a;font-weight:normal;transform:scaleX(0.9407);transform-origin:right top;">90,000</div>
<div style="position:absolute;left:17px;top:709px;width:1828px;height:1px;background:#b0b0b0"></div>
<div style="position:absolute;left:17px;top:612.5px;width:1px;height:96.5px;background:#a3a3a3"></div>
<div style="position:absolute;left:32px;top:635.5px;width:1px;height:73.5px;background:#a3a3a3"></div>
<div style="position:absolute;left:56px;top:710px;width:1789px;height:23px;background:#d3d3d3"></div>
<div style="position:absolute;left:11.1px;top:715.1px;width:12.4px;height:12.4px;box-sizing:border-box;border:1px solid #a8a8a8;border-radius:1.5px;background:linear-gradient(#fff 50%,#eeeeee)"></div>
<div style="position:absolute;left:13.1px;top:720.9px;width:8.8px;height:1.2px;background:#222"></div>
<div class="t" style="left:59.6px;top:712.50px;font-size:16.6px;line-height:19.09px;color:#3a3a3a;font-weight:normal;transform:scaleX(0.9719);transform-origin:left top;">Паллета 0000001</div>
<div style="position:absolute;left:56px;top:732px;width:1789px;height:1px;background:#c9c9c9"></div>
<div style="position:absolute;left:56px;top:733px;width:1789px;height:23px;background:#e1e1e1"></div>
<div style="position:absolute;left:26.1px;top:738.1px;width:12.4px;height:12.4px;box-sizing:border-box;border:1px solid #a8a8a8;border-radius:1.5px;background:linear-gradient(#fff 50%,#eeeeee)"></div>
<div style="position:absolute;left:28.1px;top:743.9px;width:8.8px;height:1.2px;background:#222"></div>
<div class="t" style="left:77.2px;top:735.50px;font-size:16.6px;line-height:19.09px;color:#3a3a3a;font-weight:normal;transform:scaleX(1.0371);transform-origin:left top;">Шейка свиная 500гр упак</div>
<div class="t" style="left:405.7px;top:735.50px;font-size:16.6px;line-height:19.09px;color:#9a9a9a;font-weight:normal;transform:scaleX(1.0371);transform-origin:left top;">&lt;не используется&gt;</div>
<div class="t" style="left:756.2px;top:735.50px;font-size:16.6px;line-height:19.09px;color:#3a3a3a;font-weight:normal;transform:scaleX(0.9819);transform-origin:left top;">1/03.12.24 до 03.12.24</div>
<div class="t" style="left:95.5px;top:758.50px;font-size:16.6px;line-height:19.09px;color:#3a3a3a;font-weight:normal;transform:scaleX(0.9638);transform-origin:left top;">09.01.2025 12:49:57</div>
<div class="t" style="left:405.7px;top:758.50px;font-size:16.6px;line-height:19.09px;color:#3a3a3a;font-weight:normal;transform:scaleX(1.013);transform-origin:left top;">Комплектация упаковочного листа 00-00000010 от 09.01.2025 12:49:57</div>
<div class="t" style="right:269.70000000000005px;top:758.50px;font-size:16.6px;line-height:19.09px;color:#3a3a3a;font-weight:normal;transform:scaleX(0.9407);transform-origin:right top;">90,000</div>
<div class="t" style="right:12.400000000000091px;top:758.50px;font-size:16.6px;line-height:19.09px;color:#3a3a3a;font-weight:normal;transform:scaleX(0.9407);transform-origin:right top;">90,000</div>
<div style="position:absolute;left:17px;top:778px;width:1828px;height:1px;background:#b0b0b0"></div>
<div style="position:absolute;left:17px;top:727.5px;width:1px;height:50.5px;background:#a3a3a3"></div>
<div style="position:absolute;left:32px;top:750.5px;width:1px;height:27.5px;background:#a3a3a3"></div>
<div style="position:absolute;left:56px;top:779px;width:1789px;height:23px;background:#d3d3d3"></div>
<div style="position:absolute;left:11.1px;top:784.1px;width:12.4px;height:12.4px;box-sizing:border-box;border:1px solid #a8a8a8;border-radius:1.5px;background:linear-gradient(#fff 50%,#eeeeee)"></div>
<div style="position:absolute;left:13.1px;top:789.9px;width:8.8px;height:1.2px;background:#222"></div>
<div class="t" style="left:59.6px;top:781.50px;font-size:16.6px;line-height:19.09px;color:#3a3a3a;font-weight:normal;transform:scaleX(0.9719);transform-origin:left top;">Паллета 0000004</div>
<div style="position:absolute;left:56px;top:801px;width:1789px;height:1px;background:#c9c9c9"></div>
<div style="position:absolute;left:56px;top:802px;width:1789px;height:23px;background:#e1e1e1"></div>
<div style="position:absolute;left:26.1px;top:807.1px;width:12.4px;height:12.4px;box-sizing:border-box;border:1px solid #a8a8a8;border-radius:1.5px;background:linear-gradient(#fff 50%,#eeeeee)"></div>
<div style="position:absolute;left:28.1px;top:812.9px;width:8.8px;height:1.2px;background:#222"></div>
<div class="t" style="left:77.2px;top:804.50px;font-size:16.6px;line-height:19.09px;color:#3a3a3a;font-weight:normal;transform:scaleX(1.0371);transform-origin:left top;">Шейка свиная 500гр упак</div>
<div class="t" style="left:405.7px;top:804.50px;font-size:16.6px;line-height:19.09px;color:#9a9a9a;font-weight:normal;transform:scaleX(1.0371);transform-origin:left top;">&lt;не используется&gt;</div>
<div class="t" style="left:756.2px;top:804.50px;font-size:16.6px;line-height:19.09px;color:#3a3a3a;font-weight:normal;transform:scaleX(0.9819);transform-origin:left top;">1/03.12.24 до 03.12.24</div>
<div class="t" style="left:95.5px;top:827.50px;font-size:16.6px;line-height:19.09px;color:#3a3a3a;font-weight:normal;transform:scaleX(0.9638);transform-origin:left top;">13.01.2025 13:15:39</div>
<div class="t" style="left:405.7px;top:827.50px;font-size:16.6px;line-height:19.09px;color:#3a3a3a;font-weight:normal;transform:scaleX(1.013);transform-origin:left top;">Комплектация упаковочного листа 00-00000012 от 13.01.2025 13:15:39</div>
<div class="t" style="right:269.70000000000005px;top:827.50px;font-size:16.6px;line-height:19.09px;color:#3a3a3a;font-weight:normal;transform:scaleX(0.9407);transform-origin:right top;">60,000</div>
<div class="t" style="right:12.400000000000091px;top:827.50px;font-size:16.6px;line-height:19.09px;color:#3a3a3a;font-weight:normal;transform:scaleX(0.9407);transform-origin:right top;">60,000</div>
<div style="position:absolute;left:56px;top:847px;width:1789px;height:1px;background:#e4e4e4"></div>
<div class="t" style="left:95.5px;top:850.50px;font-size:16.6px;line-height:19.09px;color:#3a3a3a;font-weight:normal;transform:scaleX(0.9638);transform-origin:left top;">15.01.2025 12:56:17</div>
<div class="t" style="left:405.7px;top:850.50px;font-size:16.6px;line-height:19.09px;color:#3a3a3a;font-weight:normal;transform:scaleX(1.013);transform-origin:left top;">Комплектация упаковочного листа 00-00000030 от 15.01.2025 12:56:17</div>
<div class="t" style="left:983.2px;top:850.50px;font-size:16.6px;line-height:19.09px;color:#3a3a3a;font-weight:normal;transform:scaleX(1.0261);transform-origin:left top;">Распоряжение на отгрузку 00-00000003</div>
<div class="t" style="left:983.2px;top:873.50px;font-size:16.6px;line-height:19.09px;color:#3a3a3a;font-weight:normal;transform:scaleX(0.9679);transform-origin:left top;">от 15.01.2025 12:56:17</div>
<div class="t" style="right:386.4000000000001px;top:850.50px;font-size:16.6px;line-height:19.09px;color:#3a3a3a;font-weight:normal;transform:scaleX(0.9407);transform-origin:right top;">60,000</div>
<div class="t" style="right:152.70000000000005px;top:850.50px;font-size:16.6px;line-height:19.09px;color:#3a3a3a;font-weight:normal;transform:scaleX(0.9407);transform-origin:right top;">60,000</div>
<div style="position:absolute;left:17px;top:893px;width:1828px;height:1px;background:#b0b0b0"></div>
<div style="position:absolute;left:17px;top:796.5px;width:1px;height:96.5px;background:#a3a3a3"></div>
<div style="position:absolute;left:32px;top:819.5px;width:1px;height:73.5px;background:#a3a3a3"></div>
<div style="position:absolute;left:56px;top:894px;width:1789px;height:23px;background:#d3d3d3"></div>
<div style="position:absolute;left:11.1px;top:899.1px;width:12.4px;height:12.4px;box-sizing:border-box;border:1px solid #a8a8a8;border-radius:1.5px;background:linear-gradient(#fff 50%,#eeeeee)"></div>
<div style="position:absolute;left:13.1px;top:904.9px;width:8.8px;height:1.2px;background:#222"></div>
<div style="position:absolute;left:398.1px;top:384.59999999999997px;width:582.0px;height:29.100000000000023px;box-sizing:border-box;border:4px solid #ff0000;border-radius:2.5px"></div>
<div style="position:absolute;left:402.3px;top:661.3px;width:922.5999999999999px;height:53.89999999999998px;box-sizing:border-box;border:4px solid #ff0000;border-radius:2.5px"></div>
<div style="position:absolute;left:969.1px;top:847.0px;width:362.9000000000001px;height:50.0px;box-sizing:border-box;border:4px solid #ff0000;border-radius:2.5px"></div>
<div style="position:absolute;left:1580.6px;top:843.8px;width:128px;height:50.80000000000007px;box-sizing:border-box;border:4px solid #ff0000;border-radius:2.5px"></div>
</body></html>
